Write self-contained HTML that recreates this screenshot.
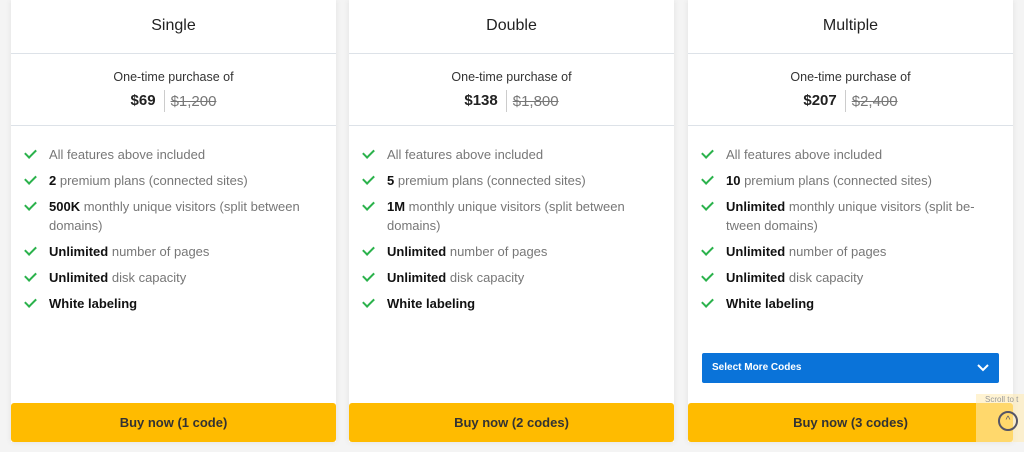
<!DOCTYPE html><html><head><style>
body{margin:0;width:1024px;height:452px;background:#f4f4f4;font-family:"Liberation Sans",sans-serif;overflow:hidden;position:relative}
.card{position:absolute;top:0;width:325px;height:442px;background:#fff;box-shadow:0 0 6px rgba(0,0,0,.08)}
.h{height:53px;border-bottom:1px solid #dde2e8;text-align:center;font-size:16px;color:#222;line-height:52px;font-weight:500}
.p{height:71px;border-bottom:1px solid #dde2e8;text-align:center}
.p .t{font-size:12.5px;color:#333;padding-top:16px}
.p .pr{margin-top:6px;font-size:15px;display:flex;justify-content:center;align-items:center}
.p b{color:#222;padding-right:8px;border-right:1px solid #ccc;line-height:22px}
.p s{color:#777;padding-left:6px}
ul{list-style:none;margin:0;padding:19px 0 0 14px}
li{position:relative;padding-left:24px;font-size:13px;color:#777;line-height:19px;margin-bottom:7px;padding-right:24px}
li b{color:#111}
li:before{content:"";position:absolute;left:2px;top:2px;width:5px;height:9px;border:solid #2bb24c;border-width:0 2px 2px 0;transform:rotate(45deg)}
.btn{position:absolute;left:0;right:0;bottom:0;height:39px;background:#ffbb00;border-radius:3px;text-align:center;line-height:39px;font-weight:bold;font-size:13px;color:#333}
.sel{position:absolute;left:14px;right:14px;top:353px;height:30px;background:#0a73d9;border-radius:2px;color:#fff;font-size:10px;font-weight:bold;line-height:30px;padding-left:10px}
</style></head><body>
<div class="card" style="left:11px"><div class="h">Single</div><div class="p"><div class="t">One-time purchase of</div><div class="pr"><b>$69</b><s>$1,200</s></div></div>
<ul><li>All features above included</li><li><b>2</b> premium plans (connected sites)</li><li><b>500K</b> monthly unique visitors (split between domains)</li><li><b>Unlimited</b> number of pages</li><li><b>Unlimited</b> disk capacity</li><li><b>White labeling</b></li></ul>
<div class="btn">Buy now (1 code)</div></div>
<div class="card" style="left:349px"><div class="h">Double</div><div class="p"><div class="t">One-time purchase of</div><div class="pr"><b>$138</b><s>$1,800</s></div></div>
<ul><li>All features above included</li><li><b>5</b> premium plans (connected sites)</li><li><b>1M</b> monthly unique visitors (split between domains)</li><li><b>Unlimited</b> number of pages</li><li><b>Unlimited</b> disk capacity</li><li><b>White labeling</b></li></ul>
<div class="btn">Buy now (2 codes)</div></div>
<div class="card" style="left:688px"><div class="h">Multiple</div><div class="p"><div class="t">One-time purchase of</div><div class="pr"><b>$207</b><s>$2,400</s></div></div>
<ul><li>All features above included</li><li><b>10</b> premium plans (connected sites)</li><li><b>Unlimited</b> monthly unique visitors (split be-tween domains)</li><li><b>Unlimited</b> number of pages</li><li><b>Unlimited</b> disk capacity</li><li><b>White labeling</b></li></ul>
<div class="sel">Select More Codes<svg style="position:absolute;right:10px;top:11px" width="12" height="8" viewBox="0 0 12 8"><path d="M1 1l5 5 5-5" stroke="#fff" stroke-width="2" fill="none"/></svg></div>
<div class="btn">Buy now (3 codes)</div></div>
<div style="position:absolute;left:976px;top:394px;width:48px;height:48px;background:rgba(255,235,180,.6)"></div>
<div style="position:absolute;left:985px;top:395px;font-size:8px;color:#999;white-space:nowrap">Scroll to t</div>
<div style="position:absolute;left:998px;top:411px;width:20px;height:20px;border:2px solid #556;border-radius:50%;box-sizing:border-box;text-align:center;font-size:10px;line-height:16px;color:#556">^</div>
</body></html>
